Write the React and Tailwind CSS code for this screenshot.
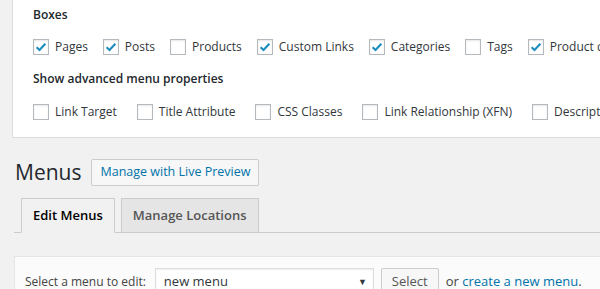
const BOXES = [
  { label: "Pages", checked: true },
  { label: "Posts", checked: true },
  { label: "Products", checked: false },
  { label: "Custom Links", checked: true },
  { label: "Categories", checked: true },
  { label: "Tags", checked: false },
  { label: "Product categories", checked: true },
];

const ADVANCED = [
  "Link Target",
  "Title Attribute",
  "CSS Classes",
  "Link Relationship (XFN)",
  "Description",
];

function Checkbox({ label, checked, wide }) {
  return (
    <label
      className={`flex shrink-0 items-center whitespace-nowrap ${
        wide ? "mr-[20px]" : "mr-[15px]"
      }`}
    >
      <span className="flex h-[16px] w-[16px] items-center justify-center border border-[#b4b9be] bg-white shadow-[inset_0_1px_2px_rgba(0,0,0,0.1)]">
        {checked && (
          <svg viewBox="0 0 16 16" className="h-[14px] w-[14px]">
            <path
              d="M3 8.2 L6.3 11.4 L13 4.2"
              fill="none"
              stroke="#1e8cbe"
              strokeWidth="2.4"
            />
          </svg>
        )}
      </span>
      <span className="ml-[6px] text-[12px] text-[#32373c]">{label}</span>
    </label>
  );
}

export default function App() {
  return (
    <div className="h-[289px] w-[600px] overflow-hidden bg-[#f1f1f1] font-['Open_Sans',sans-serif] text-[#23282d]">
      <div className="ml-[12px] h-[138px] w-[700px] border border-t-0 border-[#dddddd] bg-white px-[20px] pt-[5px]">
        <h5 className="text-[12px] font-semibold leading-[20px]">Boxes</h5>
        <div className="mt-[14px] flex h-[16px] items-center">
          {BOXES.map((b) => (
            <Checkbox key={b.label} {...b} />
          ))}
        </div>
        <h5 className="mt-[14px] text-[12px] font-semibold leading-[20px]">
          Show advanced menu properties
        </h5>
        <div className="mt-[15px] flex h-[16px] items-center">
          {ADVANCED.map((l) => (
            <Checkbox key={l} label={l} checked={false} wide />
          ))}
        </div>
      </div>

      <div className="mt-[20px] flex items-center pl-[15px]">
        <h1 className="text-[21px] font-normal leading-[29px] text-[#23282d]">Menus</h1>
        <button className="ml-[10px] h-[27px] rounded-[2px] border border-[#cccccc] bg-[#f7f7f7] px-[8px] text-[12.5px] text-[#0073aa]">
          Manage with Live Preview
        </button>
      </div>

      <div className="mt-[11px] ml-[14px] flex items-end border-b border-[#cccccc] pl-[7px]">
        <div className="-mb-px flex h-[35px] items-center border border-[#cccccc] border-b-[#f1f1f1] bg-[#f1f1f1] px-[11px] text-[13px] font-semibold text-black">
          Edit Menus
        </div>
        <div className="ml-[6px] flex h-[34px] items-center border border-b-0 border-[#cccccc] bg-[#e5e5e5] px-[11px] text-[13px] font-semibold text-[#555555]">
          Manage Locations
        </div>
      </div>

      <div className="mt-[23px] ml-[14px] h-[60px] w-[700px] border border-[#e5e5e5] bg-[#fbfbfb] pl-[10px] pt-[11px]">
        <div className="flex items-center text-[12px]">
          <span className="text-[#444]">Select a menu to edit:</span>
          <div className="ml-[9px] flex h-[28px] w-[219px] items-center justify-between border border-[#dddddd] bg-white pl-[8px] pr-[6px] text-[13px] text-[#32373c] shadow-[inset_0_1px_2px_rgba(0,0,0,0.07)]">
            <span>new menu</span>
            <span className="text-[9px]">▼</span>
          </div>
          <button className="ml-[7px] h-[28px] rounded-[2px] border border-[#cccccc] bg-[#f7f7f7] px-[10px] text-[13px] text-[#555]">
            Select
          </button>
          <span className="ml-[7px] text-[13px] text-[#444]">
            or <span className="text-[#0073aa]">create a new menu</span>.
          </span>
        </div>
      </div>
    </div>
  );
}
